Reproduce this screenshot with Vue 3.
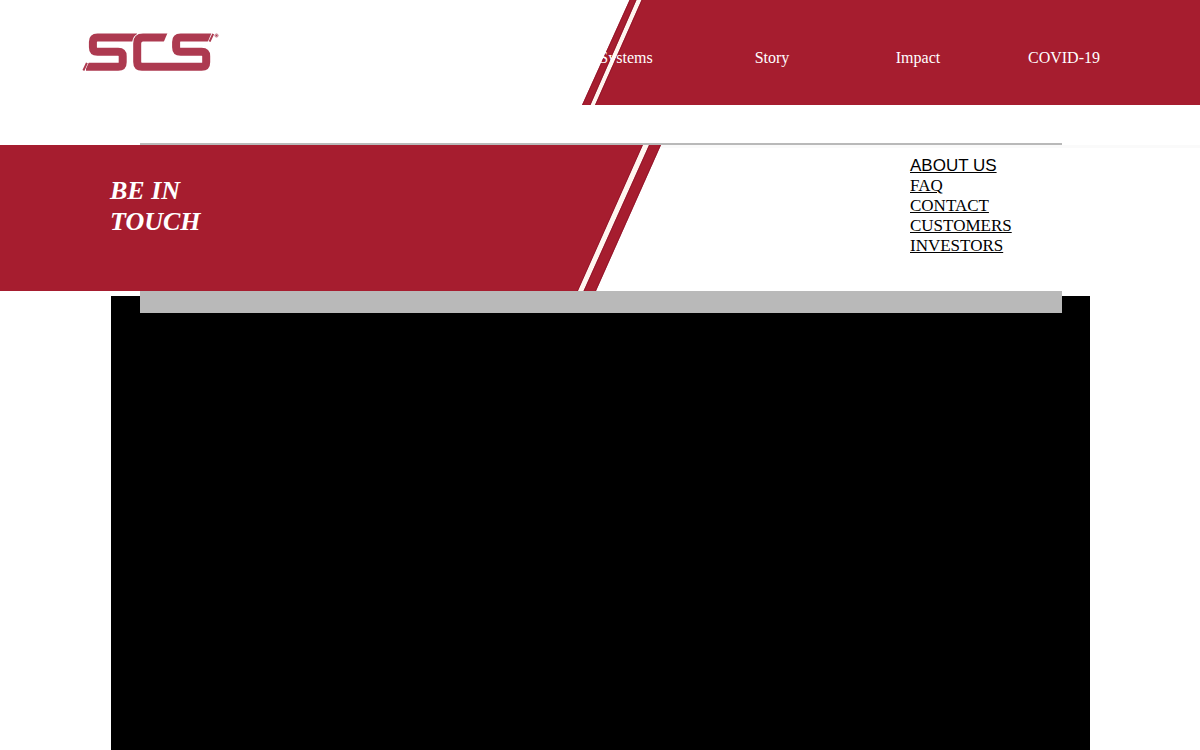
<script setup>
const navItems = ['Systems', 'Story', 'Impact', 'COVID-19']
const links = ['ABOUT US', 'FAQ', 'CONTACT', 'CUSTOMERS', 'INVESTORS']
</script>

<template>
  <div class="page">
    <header class="header">
      <svg class="backdrop" viewBox="0 0 1200 105" preserveAspectRatio="none" aria-hidden="true">
        <path class="cream" d="M629.5 0H1200V105H582z" />
        <path class="red" d="M629.5 0H636.5L590.5 105H582z" />
        <path class="red" d="M641.5 0H1200V105H595z" />
        <path class="edge" d="M630 0L582.5 105M636 0L590 105M642 0L595.5 105" />
      </svg>
      <a class="logo" href="#" aria-label="SCS home">
        <svg width="138" height="40" viewBox="82 32 138 40" aria-hidden="true">
          <g class="letters">
            <path d="M137 37.6H97.5Q92.9 37.6 92.9 42.1V47.2Q92.9 51.7 97.5 51.7H118.2Q122.7 51.7 122.7 56.2V62.2Q122.7 66.7 118.2 66.7H86" />
            <path class="gap" d="M170 37.6H143Q137.2 37.6 137.2 43.4V62Q137.2 66.7 141.9 66.7H150" />
            <path d="M170 37.6H143Q137.2 37.6 137.2 43.4V62Q137.2 66.7 141.9 66.7H201.7Q206.2 66.7 206.2 62.2V56.2Q206.2 51.7 201.7 51.7H180.6Q176.1 51.7 176.1 47.2V42.1Q176.1 37.6 180.6 37.6H213" />
          </g>
          <path class="paper" d="M167.5 33L163.5 42.5H171.5V33z" />
          <path class="paper" d="M211.5 33L207.5 42.5H215V33z" />
          <path class="paper" d="M82 62H89L84.5 72H82z" />
          <path class="slash" d="M213.2 33.8L209.6 41.6M86.9 62.8L83.4 70.5" />
          <circle class="mark" cx="216.5" cy="35.5" r="1.6" />
          <circle class="dot" cx="216.5" cy="35.5" r=".7" />
        </svg>
      </a>
      <nav class="nav">
        <a v-for="item in navItems" :key="item" href="#">{{ item }}</a>
      </nav>
    </header>

    <section class="band">
      <svg class="backdrop" viewBox="0 0 1200 146" preserveAspectRatio="none" aria-hidden="true">
        <rect class="white" width="1200" height="146" />
        <rect class="haze" width="1200" height="3" />
        <path class="red" d="M0 0H643L578 146H0z" />
        <path class="cream" d="M643 0H649L583.5 146H578z" />
        <path class="red" d="M649 0H661L596 146H583.5z" />
        <path class="edge" d="M642.5 0L577.5 146M649.5 0L584 146M660.5 0L595.5 146" />
      </svg>
      <h2 class="title">BE IN TOUCH</h2>
      <ul class="links">
        <li v-for="link in links" :key="link"><a href="#">{{ link }}</a></li>
      </ul>
    </section>

    <main class="stage"></main>
  </div>
</template>

<style>
body {
  margin: 0;
  background: #fff;
}
</style>

<style scoped>
.page {
  display: flex;
  flex-direction: column;
  min-height: 100vh;
  font-family: "Liberation Serif", serif;
  font-size: 16px;
  isolation: isolate;
}
.header {
  position: relative;
  display: flex;
  justify-content: space-between;
  align-items: flex-start;
  box-sizing: border-box;
  min-height: 105px;
  padding: 32px 63px 0 82px;
}
.backdrop {
  position: absolute;
  inset: 0;
  width: 100%;
  height: 100%;
  z-index: -1;
}
.red {
  fill: #a61d2f;
}
.cream {
  fill: #fff6f0;
}
.white,
.paper {
  fill: #fff;
}
.haze {
  fill: #fafafa;
}
.edge {
  fill: none;
  stroke: #8c1026;
  stroke-width: 1;
  stroke-opacity: .7;
}
.logo,
.logo svg {
  display: block;
}
.letters path {
  fill: none;
  stroke: #ad3a50;
  stroke-width: 8;
}
.letters .gap {
  stroke: #fff;
  stroke-width: 10;
}
.slash {
  stroke: #ad3a50;
  stroke-width: 2;
}
.mark {
  fill: #d9a3ae;
  stroke: #c98290;
  stroke-width: 1;
}
.dot {
  fill: #ad3a50;
}
.nav {
  display: grid;
  grid-template-columns: repeat(4, 1fr);
  width: 55.5%;
  max-width: 584px;
  margin-top: 17px;
}
.nav a {
  color: #fff;
  line-height: 18px;
  text-align: center;
  text-decoration: none;
}
.band {
  position: relative;
  display: flex;
  justify-content: space-between;
  align-items: flex-start;
  box-sizing: border-box;
  min-height: 146px;
  margin-top: 40px;
  padding: 11px 110px 0;
}
.band::before {
  content: "";
  position: absolute;
  top: -2px;
  bottom: -22px;
  left: 140px;
  right: 138px;
  z-index: -1;
  background: #b9b9b9;
}
.title {
  width: 100px;
  margin: 19px 0 0;
  color: #fff;
  font-size: 26px;
  font-style: italic;
  font-weight: bold;
  line-height: 31px;
}
.links {
  width: 180px;
  margin: 0;
  padding: 0;
  list-style: none;
  font-size: 17px;
  line-height: 20px;
}
.links a {
  color: #000;
}
.links li:first-child {
  font-family: "Liberation Sans", sans-serif;
}
.stage {
  position: relative;
  z-index: -2;
  flex: 1;
  min-height: 400px;
  margin: 5px 110px 0 111px;
  background: #000;
}
</style>
